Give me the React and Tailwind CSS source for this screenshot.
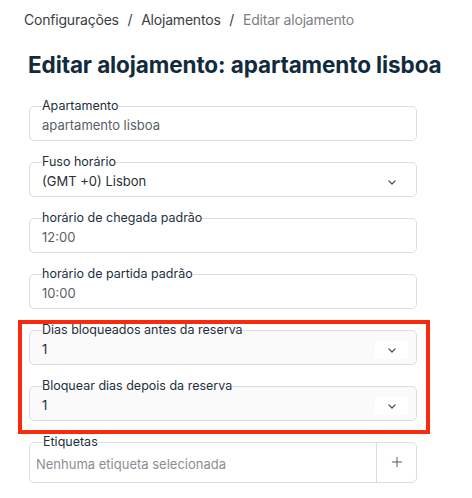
import { Plus } from 'lucide-react';

const Chevron = () => (
    <svg width="8" height="5" viewBox="0 0 8 5" fill="none" className="text-[#4a4d52]">
        <path d="M1 1l3 3 3-3" stroke="currentColor" strokeWidth="1.2" strokeLinecap="round" strokeLinejoin="round" />
    </svg>
);

function Field({ label, value, select, muted, shaded }) {
    return (
        <fieldset className={`border border-[#d9dce1] rounded-[5px] pl-3 pr-[13px] pb-[5px] ${shaded ? 'bg-[#fafafa]' : 'bg-white'}`}>
            <legend className="text-[12.5px] leading-[14px] text-[#1d3140] px-0">{label}</legend>
            <div className="flex items-center justify-between h-[18px] mt-[4px]">
                <span className={`text-[13px] ${muted ? 'text-[#5a5f66]' : 'text-[#2b2f33]'}`}>{value}</span>
                {select && (
                    <span className={`flex items-center justify-center w-[33px] h-[18px] -mr-[5px] ${shaded ? 'bg-white' : ''}`}>
                        <Chevron />
                    </span>
                )}
            </div>
        </fieldset>
    );
}

export default function App() {
    return (
        <div className="min-h-screen bg-white px-6 pt-[11px]" style={{ fontFamily: 'Inter, "Noto Sans", sans-serif' }}>
            <nav className="text-[14px] leading-[18px] text-[#3a3d41] tracking-[-0.2px]">
                Configurações <span className="mx-[5px]">/</span> Alojamentos <span className="mx-[5px]">/</span> <span className="text-[#7b7f85]">Editar alojamento</span>
            </nav>

            <h1 className="mt-[22px] ml-1 text-[22.5px] leading-[28px] font-bold text-[#112b3c] tracking-[-0.1px]">
                Editar alojamento: apartamento lisboa
            </h1>

            <div className="mt-[20px] ml-[5px] w-[388px] flex flex-col gap-[14px]">
                <Field label="Apartamento" value="apartamento lisboa" muted />
                <Field label="Fuso horário" value="(GMT +0) Lisbon" select />
                <Field label="horário de chegada padrão" value="12:00" muted />
                <Field label="horário de partida padrão" value="10:00" muted />

                <div className="relative flex flex-col gap-[14px]">
                    <Field label="Dias bloqueados antes da reserva" value="1" select shaded />
                    <Field label="Bloquear dias depois da reserva" value="1" select shaded />
                    <div className="absolute -left-[11px] -right-[13px] -top-[3px] -bottom-[13px] border-4 border-[#fb2a0d] pointer-events-none" />
                </div>

                <fieldset className="border border-[#d9dce1] rounded-[5px] flex">
                    <legend className="ml-[13px] text-[12.5px] leading-[14px] text-[#1d3140] px-0">Etiquetas</legend>
                    <div className="flex w-full -mt-[7px]">
                        <div className="flex-1 flex items-center pl-[6px] pt-[6px] h-[40px] text-[13px] text-[#8a8e94]">
                            Nenhuma etiqueta selecionada
                        </div>
                        <div className="w-[40px] h-[40px] border-l border-[#d9dce1] flex items-center justify-center text-[#444]">
                            <Plus size={16} strokeWidth={1.3} />
                        </div>
                    </div>
                </fieldset>
            </div>
        </div>
    );
}
